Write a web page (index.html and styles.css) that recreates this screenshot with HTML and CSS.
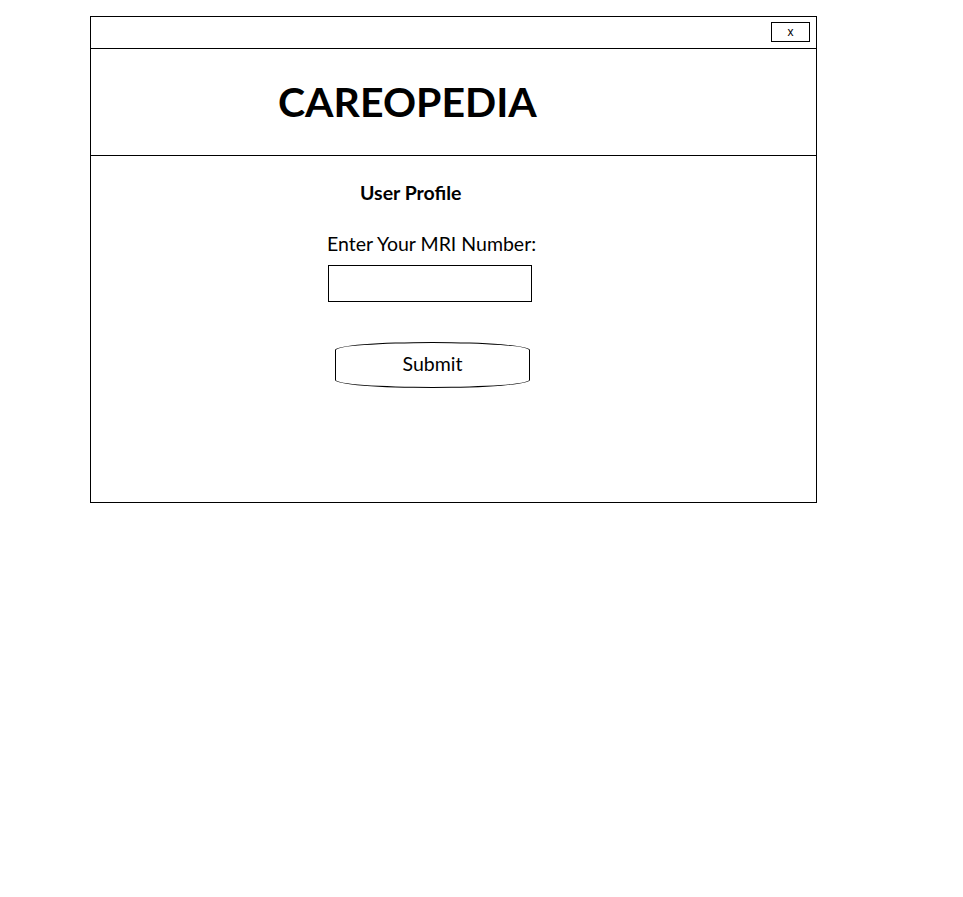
FILE: index.html
```html
<!DOCTYPE html>
<html>
<head>
<meta charset="utf-8">
<link rel="stylesheet" href="styles.css">
</head>
<body>
<div class="window">
  <div class="titlebar">
    <button class="close">x</button>
  </div>
  <div class="header">
    <h1 class="brand">CAREOPEDIA</h1>
  </div>
  <div class="content">
    <div class="section-title">User Profile</div>
    <label class="label" for="mri">Enter Your MRI Number:</label>
    <input class="field" id="mri" type="text">
    <button class="submit">Submit</button>
  </div>
</div>
</body>
</html>
```
FILE: styles.css
```css
html, body {
  margin: 0;
  padding: 0;
  background: #fff;
}
body {
  font-family: Lato, "Open Sans", sans-serif;
  color: #000;
}
.window {
  margin-left: 90px;
  margin-top: 16px;
  width: 725px;
  border: 1px solid #000;
}
.titlebar {
  height: 31px;
  border-bottom: 1px solid #000;
  display: flex;
  justify-content: flex-end;
  align-items: flex-start;
  padding-right: 6px;
}
.close {
  margin-top: 5px;
  width: 39px;
  height: 20px;
  border: 1px solid #000;
  background: #fff;
  font-family: "Liberation Sans", sans-serif;
  font-size: 12px;
  line-height: 16px;
  padding: 0;
  color: #000;
}
.header {
  height: 106px;
  border-bottom: 1px solid #000;
  display: flex;
  align-items: center;
  padding-left: 187px;
}
.brand {
  margin: 0;
  font-size: 41px;
  font-weight: bold;
  line-height: 48px;
}
.content {
  height: 346px;
  display: flex;
  flex-direction: column;
  align-items: flex-start;
}
.section-title {
  margin-top: 25px;
  margin-left: 269px;
  font-size: 19.5px;
  font-weight: bold;
  line-height: 24px;
}
.label {
  margin-top: 27px;
  margin-left: 236px;
  font-size: 19.5px;
  line-height: 24px;
}
.field {
  margin-top: 9px;
  margin-left: 237px;
  width: 204px;
  height: 37px;
  box-sizing: border-box;
  border: 1px solid #000;
  padding: 0;
}
.submit {
  margin-top: 40px;
  margin-left: 244px;
  width: 195px;
  height: 46px;
  box-sizing: border-box;
  border: 1px solid #000;
  border-radius: 50% / 8px;
  background: #fff;
  font-family: Lato, "Open Sans", sans-serif;
  font-size: 19.5px;
  color: #000;
  padding: 0 0 3px 0;
}
```
